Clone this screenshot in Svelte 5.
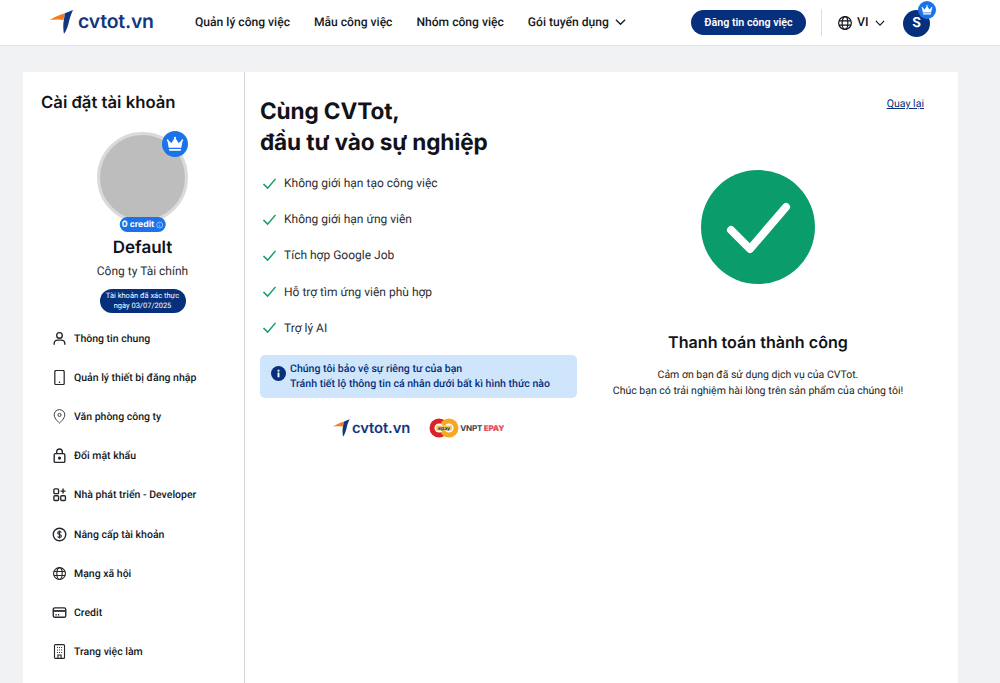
<script>
  const menu = [
    { label: 'Thông tin chung', icon: 'user' },
    { label: 'Quản lý thiết bị đăng nhập', icon: 'phone' },
    { label: 'Văn phòng công ty', icon: 'pin' },
    { label: 'Đổi mật khẩu', icon: 'lock' },
    { label: 'Nhà phát triển - Developer', icon: 'apps' },
    { label: 'Nâng cấp tài khoản', icon: 'dollar' },
    { label: 'Mạng xã hội', icon: 'globe' },
    { label: 'Credit', icon: 'card' },
    { label: 'Trang việc làm', icon: 'building' }
  ];
  const perks = [
    'Không giới hạn tạo công việc',
    'Không giới hạn ứng viên',
    'Tích hợp Google Job',
    'Hỗ trợ tìm ứng viên phù hợp',
    'Trợ lý AI'
  ];
</script>

{#snippet mark(cls)}
  <svg class={cls} viewBox="0 0 26 25" aria-hidden="true">
    <path d="M0 10.500 C5 7 10 5 15.500 3.500 L14 10.500 C9 9.500 4 10 0 10.500Z" fill="#f47b20" />
    <path d="M24 0 C21 1 18 2.500 15.500 3.500 C15 7 14.500 10 14 13 C13.500 17 14 21 14.500 25 C17.500 21 19 16 20 11 C21 7 22.500 3 24 0Z" fill="#12377f" />
  </svg>
{/snippet}

{#snippet crown(cls)}
  <svg class={cls} viewBox="0 0 24 24" aria-hidden="true">
    <path d="M4 18.500h16v1.500a1 1 0 0 1-1 1H5a1 1 0 0 1-1-1z M3.600 17 2 8.400a1.300 1.300 0 1 1 1.600-.9l3.600 3.300 3.900-6a1.400 1.400 0 1 1 1.800 0l3.900 6 3.600-3.300a1.300 1.300 0 1 1 1.600.9L20.400 17z" fill="#fff" />
  </svg>
{/snippet}

{#snippet globe(cls)}
  <svg class={cls} viewBox="0 0 24 24" fill="none" stroke="currentColor" stroke-width="1.800" aria-hidden="true">
    <circle cx="12" cy="12" r="9.500" />
    <ellipse cx="12" cy="12" rx="4.300" ry="9.500" />
    <path d="M3 8.800h18M3 15.200h18" />
  </svg>
{/snippet}

<header class="topbar">
  <a class="logo" href="#top">
    {@render mark('logo-mark')}
    <span class="logo-text">cvtot.vn</span>
  </a>
  <nav class="nav">
    <span>Quản lý công việc</span>
    <span>Mẫu công việc</span>
    <span>Nhóm công việc</span>
    <span class="nav-drop">Gói tuyển dụng
      <svg class="chev" viewBox="0 0 12 8" aria-hidden="true"><path d="M1 1.500 6 6.500l5-5" /></svg>
    </span>
  </nav>
  <button class="post">Đăng tin công việc</button>
  <div class="divider"></div>
  <div class="lang">
    {@render globe('lang-globe')}
    <span>VI</span>
    <svg class="chev" viewBox="0 0 12 8" aria-hidden="true"><path d="M1 1.500 6 6.500l5-5" /></svg>
  </div>
  <div class="avatar">
    S
    <span class="avatar-crown">{@render crown('crown-sm')}</span>
  </div>
</header>

<main class="page">
  <div class="card">
    <aside class="side">
      <h2>Cài đặt tài khoản</h2>
      <div class="profile">
        <div class="photo">
          <span class="photo-crown">{@render crown('crown-lg')}</span>
          <span class="credit">0 credit
            <svg viewBox="0 0 12 12" fill="none" stroke="#cfe0ff" stroke-width="1" aria-hidden="true"><circle cx="6" cy="6" r="4.500" /><path d="M6 5.500v3M6 3.500v1" /></svg>
          </span>
        </div>
        <div class="name">Default</div>
        <div class="company">Công ty Tài chính</div>
        <div class="verified">Tài khoản đã xác thực<br />ngày 03/07/2025</div>
      </div>
      <ul class="menu">
        {#each menu as item}
          <li>
            <span class="mi">
              {#if item.icon === 'user'}
                <svg viewBox="0 0 24 24" fill="none" stroke="currentColor" stroke-width="2.200"><circle cx="12" cy="7" r="4.500" /><path d="M3.500 22v-2A5.500 5.500 0 0 1 9 14.500h6a5.500 5.500 0 0 1 5.500 5.500v2" /></svg>
              {:else if item.icon === 'phone'}
                <svg viewBox="0 0 24 24" fill="none" stroke="currentColor" stroke-width="2"><rect x="4.500" y="0.500" width="15" height="23" rx="2.500" /><path d="M12 19.500v.1" stroke-linecap="round" stroke-width="2.400" /></svg>
              {:else if item.icon === 'pin'}
                <svg viewBox="0 0 24 24" fill="none" stroke="currentColor" stroke-width="1.400"><path d="M12 22.500s-8.500-7-8.500-13a8.500 8.500 0 0 1 17 0c0 6-8.500 13-8.500 13Z" /><circle cx="12" cy="9.500" r="2.500" /></svg>
              {:else if item.icon === 'lock'}
                <svg viewBox="0 0 24 24" fill="none" stroke="currentColor" stroke-width="2.200"><rect x="3.500" y="9" width="17" height="14" rx="2" /><path d="M7.500 9V6a4.500 4.500 0 0 1 9 0v3" /><circle cx="12" cy="16" r="1.500" fill="currentColor" /></svg>
              {:else if item.icon === 'apps'}
                <svg viewBox="0 0 24 24" fill="none" stroke="currentColor" stroke-width="2.200"><rect x="3" y="3" width="7.500" height="7.500" rx="1.500" /><rect x="3" y="14" width="7.500" height="7.500" rx="1.500" /><rect x="14" y="14" width="7.500" height="7.500" rx="1.500" /><path d="M17.700 2.500v8M13.700 6.500h8" /></svg>
              {:else if item.icon === 'dollar'}
                <svg viewBox="0 0 24 24" fill="none" stroke="currentColor" stroke-width="2.200"><circle cx="12" cy="12" r="10" /><path d="M15 8.800c-.6-1-1.700-1.500-3-1.500-1.700 0-3 .9-3 2.300 0 3.100 6 1.700 6 4.800 0 1.400-1.300 2.300-3 2.300-1.300 0-2.500-.6-3-1.500M12 5.500v13" stroke-width="1.800" /></svg>
              {:else if item.icon === 'globe'}
                {@render globe('')}
              {:else if item.icon === 'card'}
                <svg viewBox="0 0 24 24" fill="none" stroke="currentColor" stroke-width="2.200"><rect x="2" y="4.500" width="20" height="15" rx="2.500" /><path d="M2 9.500h20" stroke-width="2.800" /><path d="M5.500 15.500h2M9.500 15.500h2" /></svg>
              {:else}
                <svg viewBox="0 0 24 24" fill="none" stroke="currentColor" stroke-width="1.800"><rect x="4" y="1" width="16" height="22" rx="1.500" /><path d="M8 5.500h1.500M11.300 5.500h1.500M14.600 5.500h1.500M8 9.500h1.500M11.300 9.500h1.500M14.600 9.500h1.500M8 13.500h1.500M11.300 13.500h1.500M14.600 13.500h1.500M9.500 23v-5.500h5V23" /></svg>
              {/if}
            </span>
            <span>{item.label}</span>
          </li>
        {/each}
      </ul>
    </aside>

    <section class="content">
      <div class="left">
        <h1>Cùng CVTot,<br />đầu tư vào sự nghiệp</h1>
        <ul class="perks">
          {#each perks as perk}
            <li>
              <svg viewBox="0 0 16 14" fill="none" stroke="#109a6c" stroke-width="1.600" aria-hidden="true"><path d="M1.500 7.500 6 12 14.500 2" /></svg>
              <span>{perk}</span>
            </li>
          {/each}
        </ul>
        <div class="notice">
          <svg viewBox="0 0 16 16" aria-hidden="true"><circle cx="8" cy="8" r="8" fill="#06307c" /><rect x="7" y="7" width="2" height="5" fill="#fff" /><rect x="7" y="4" width="2" height="2" fill="#fff" /></svg>
          <div>Chúng tôi bảo vệ sự riêng tư của bạn<br />Tránh tiết lộ thông tin cá nhân dưới bất kì hình thức nào</div>
        </div>
        <div class="brands">
          <span class="brand-cv">
            {@render mark('brand-mark')}
            <span>cvtot.vn</span>
          </span>
          <span class="epay">
            <svg viewBox="0 0 30 20" aria-hidden="true">
              <circle cx="10" cy="10" r="9.500" fill="#d8232a" />
              <circle cx="20" cy="10" r="9.500" fill="#f7a823" />
              <circle cx="10" cy="10" r="4.500" fill="#fff" />
              <circle cx="20" cy="10" r="4.500" fill="#fff" />
              <rect x="7" y="7.500" width="16" height="5" rx="1" fill="#f7c65a" />
              <text x="15" y="11.500" text-anchor="middle" class="epay-mini">epay</text>
            </svg>
            <span class="epay-text">VNPT <b>EPAY</b></span>
          </span>
        </div>
      </div>
      <div class="right">
        <a class="back" href="#top">Quay lại</a>
        <svg class="ok" viewBox="0 0 114 114" aria-hidden="true">
          <circle cx="57" cy="57" r="57" fill="#0a9c6b" />
          <path d="M30 60 L49 79 L85 37" fill="none" stroke="#fff" stroke-width="8" stroke-linecap="round" stroke-linejoin="round" />
        </svg>
        <h3>Thanh toán thành công</h3>
        <p>Cảm ơn bạn đã sử dụng dịch vụ của CVTot.<br />Chúc bạn có trải nghiệm hài lòng trên sản phẩm của chúng tôi!</p>
      </div>
    </section>
  </div>
</main>

<style>
  :global(body) {
    margin: 0;
    background: #f1f2f4;
    font-family: Roboto, "Liberation Sans", sans-serif;
    color: #111318;
    height: 683px;
    overflow: hidden;
    text-rendering: geometricPrecision;
  }
  ul { list-style: none; margin: 0; padding: 0; }
  a { color: inherit; }

  .topbar {
    height: 45px;
    background: #fff;
    border-bottom: 1px solid #e4e5e8;
    display: flex;
    align-items: center;
    padding-left: 50px;
    box-sizing: content-box;
  }
  .logo { display: flex; align-items: center; gap: 3px; text-decoration: none; width: 145px; margin-top: -1px; }
  .logo-mark { width: 25px; height: 24px; }
  .logo-text { font: 600 19.400px/1 Inter, sans-serif; color: #12377f; letter-spacing: -0.2px; }
  .nav { display: flex; gap: 24px; font-size: 12.100px; font-weight: 500; color: #15181d; width: 496px; margin-top: -1px; }
  .nav-drop { display: flex; align-items: center; gap: 6px; }
  .chev { width: 11px; height: 8px; fill: none; stroke: #1b1e24; stroke-width: 1.500; }
  .post {
    width: 115px; height: 25px; border: 0; border-radius: 13px;
    background: #06307c; color: #fff;
    font: 600 10.700px Roboto, sans-serif; padding: 0;
  }
  .divider { width: 1px; height: 27px; background: #dcdde0; margin-left: 15px; }
  .lang { display: flex; align-items: center; font-size: 12.400px; font-weight: 500; margin-left: 15px; width: 66px; }
  .lang-globe { width: 16px; height: 16px; margin-right: 4px; }
  .lang .chev { margin-left: 6px; width: 10px; }
  .avatar {
    position: relative; width: 27px; height: 27px; border-radius: 50%;
    background: #06307c; color: #fff; font-size: 14px; font-weight: 700;
    display: flex; align-items: center; justify-content: center; margin-top: 1px;
  }
  .avatar-crown {
    position: absolute; left: 15px; top: -9px; width: 18px; height: 18px; border-radius: 50%;
    background: #1a73e8; display: flex; align-items: center; justify-content: center;
  }
  .crown-sm { width: 12px; height: 12px; }

  .page { padding: 26px 42px 0 23px; }
  .card { background: #fff; display: flex; height: 640px; width: 935px; }

  .side { width: 221px; border-right: 1px solid #d6d7da; flex: none; }
  .side h2 { font: 600 16.700px/22px Inter, sans-serif; margin: 0; padding: 20px 0 0 18px; color: #111318; }
  .profile { display: flex; flex-direction: column; align-items: center; margin-top: 18px; padding-left: 18px; }
  .photo {
    position: relative; width: 85px; height: 85px; border-radius: 50%;
    background: #bdbdbd; border: 3px solid #dadada;
  }
  .photo-crown {
    position: absolute; right: -3px; top: -4px; width: 26px; height: 26px; border-radius: 50%;
    background: #1a73e8; display: flex; align-items: center; justify-content: center;
  }
  .crown-lg { width: 18px; height: 18px; }
  .credit {
    position: absolute; left: 50%; transform: translateX(-50%); bottom: -12px;
    background: #1a73e8; color: #fff; border-radius: 8px; height: 15px; padding: 1px 2.500px 0;
    box-sizing: border-box;
    display: flex; align-items: center; gap: 1px; white-space: nowrap;
    font: 700 8.700px/14px Inter, sans-serif;
  }
  .credit svg { width: 8px; height: 8px; }
  .name { font: 600 17px/22px Inter, sans-serif; margin-top: 14px; }
  .company { font-size: 12px; line-height: 16px; margin-top: 4px; color: #2b2e33; }
  .verified {
    margin-top: 10px; width: 86px; height: 24px; border-radius: 12px;
    background: #06307c; color: #fff; text-align: center;
    font-size: 7.500px; line-height: 10px; padding-top: 2px; box-sizing: border-box;
  }
  .menu { padding: 0 0 0 29px; margin-top: 6px; }
  .menu li {
    display: flex; align-items: center; height: 39.100px;
    font-size: 10.500px; font-weight: 500; color: #15181d; white-space: nowrap;
  }
  .mi { width: 15px; height: 15px; margin-right: 7px; display: flex; color: #24272c; }
  .mi svg { width: 15px; height: 15px; }
  .mi :global(svg) { width: 15px; height: 15px; }

  .content { flex: 1; display: flex; padding-left: 15px; }
  .left { width: 317px; flex: none; }
  h1 { font: 700 22.600px/31px Inter, sans-serif; margin: 0; padding-top: 24px; color: #111318; letter-spacing: -0.12px; }
  .perks { margin-top: 7px; }
  .perks li { display: flex; align-items: center; height: 36.200px; font-size: 12px; color: #2b2e33; }
  .perks svg { width: 15px; height: 13px; margin: 0 7px 0 2px; }
  .notice {
    margin-top: 9px; height: 43px; border-radius: 5px; background: #cfe5fb;
    display: flex; align-items: center; color: #06307c;
    font-size: 10.560px; font-weight: 500; line-height: 15px;
  }
  .notice svg { width: 15px; height: 15px; margin: -5px 4px 0 11px; flex: none; }
  .brands { display: flex; align-items: center; margin-top: 20px; padding-left: 73px; gap: 19px; }
  .brand-cv { display: flex; align-items: center; gap: 1px; font: 600 14.800px/1 Inter, sans-serif; color: #12377f; letter-spacing: -0.1px; }
  .brand-mark { width: 18px; height: 18px; }
  .epay { display: flex; align-items: center; gap: 1px; }
  .epay svg { width: 30px; height: 20px; }
  .epay-mini { font: 700 5px Inter, sans-serif; fill: #06307c; }
  .epay-text { font: 700 8px Inter, sans-serif; color: #37404f; letter-spacing: -0.2px; }
  .epay-text b { color: #e4505a; }

  .right { position: relative; flex: 1; display: flex; flex-direction: column; align-items: center; padding-right: 19px; box-sizing: border-box; }
  .back { position: absolute; right: 34px; top: 25px; font-size: 10.600px; line-height: 14px; color: #06307c; }
  .ok { width: 114px; height: 114px; margin-top: 98px; flex: none; }
  h3 { font: 600 16.100px/22px Inter, sans-serif; margin: 47px 0 0; }
  .right p { margin: 14px 0 0; text-align: center; font-size: 10.500px; line-height: 15.500px; color: #1b1e24; white-space: nowrap; }
</style>
